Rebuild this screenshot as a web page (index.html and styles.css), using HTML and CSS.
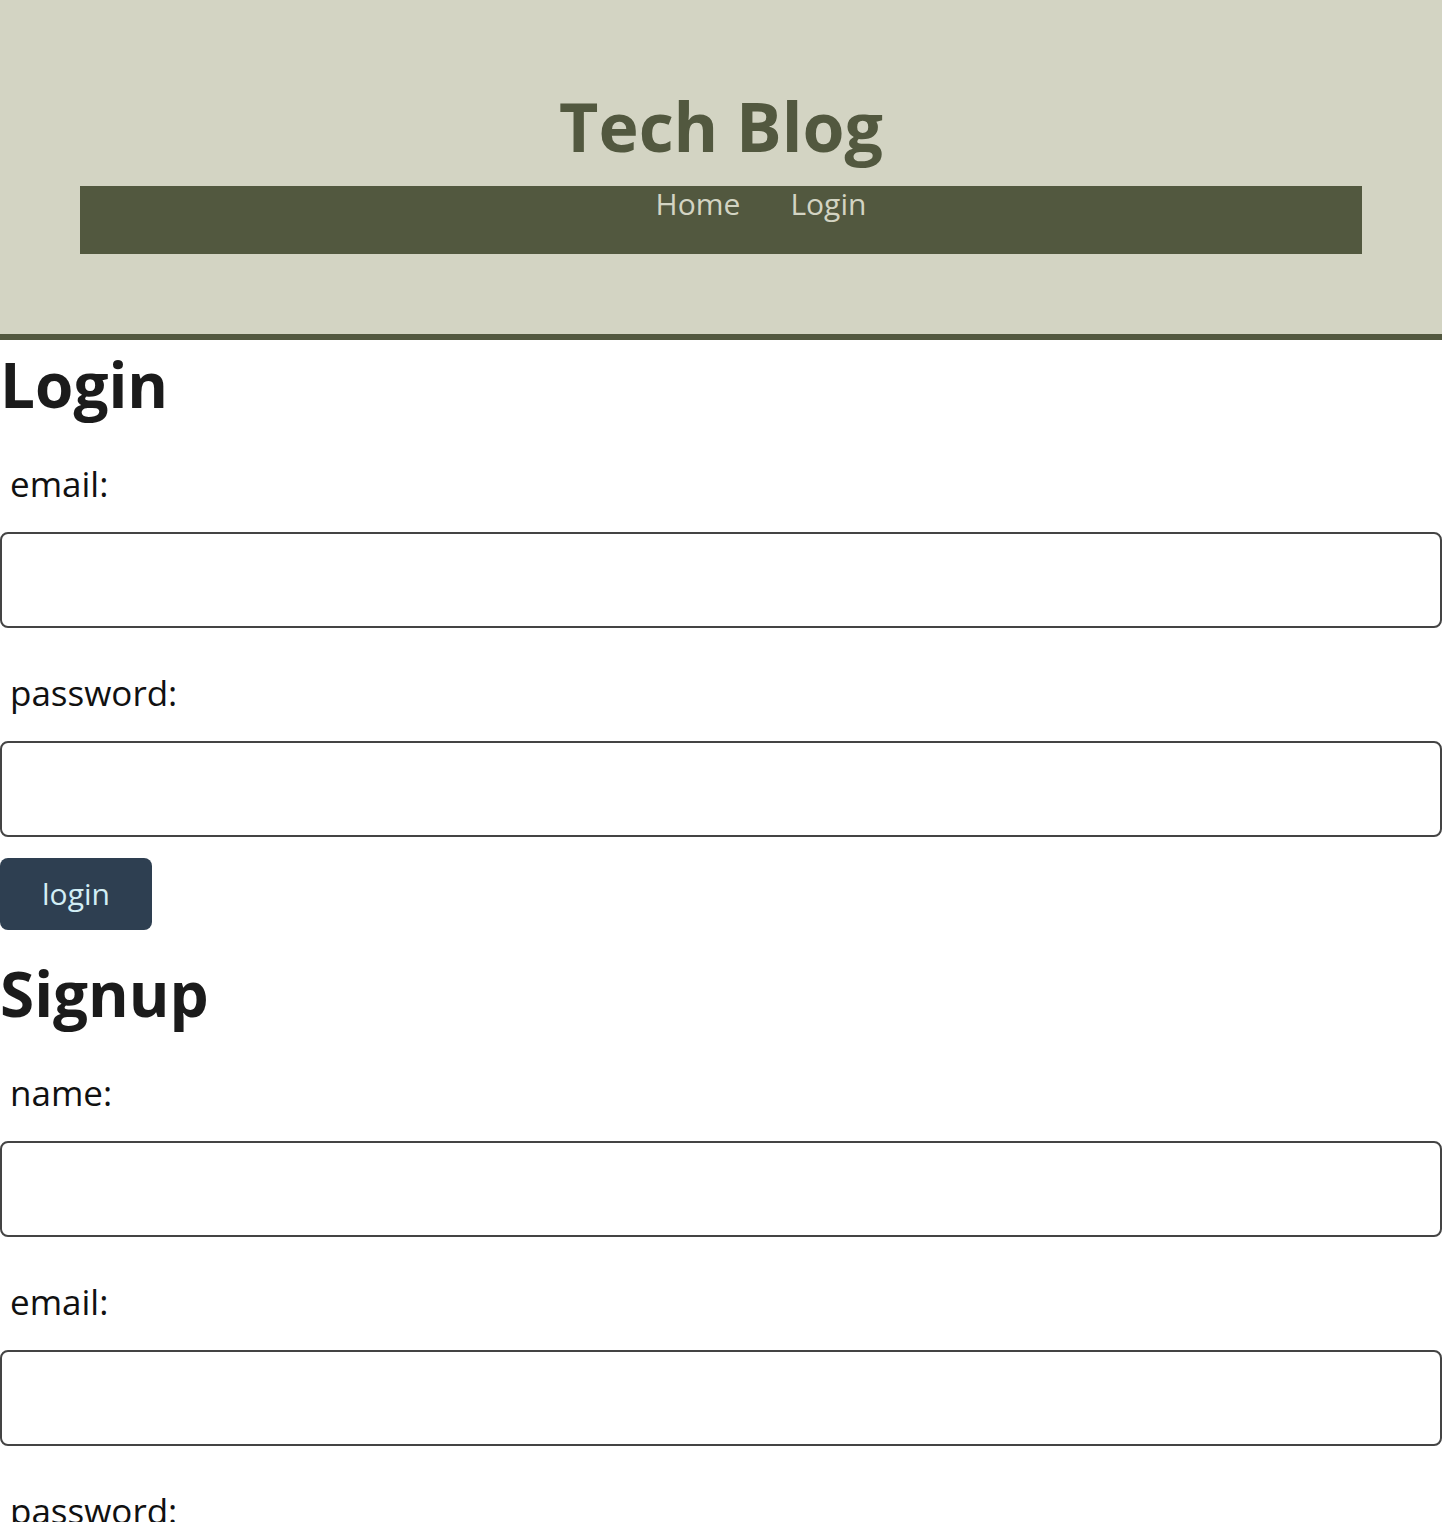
FILE: index.html
```html
<!DOCTYPE html>
<html lang="en">
<head>
<meta charset="utf-8">
<title>Tech Blog</title>
<link rel="stylesheet" href="styles.css">
</head>
<body>
<header class="site-header">
  <h1 class="site-title">Tech Blog</h1>
  <nav class="site-nav">
    <a class="nav-link" href="#">Home</a>
    <a class="nav-link" href="#">Login</a>
  </nav>
</header>
<main class="content">
  <section class="auth-block">
    <h2 class="section-title">Login</h2>
    <form class="auth-form">
      <label class="field-label" for="login-email">email:</label>
      <input class="field-input" id="login-email" type="text">
      <label class="field-label" for="login-password">password:</label>
      <input class="field-input" id="login-password" type="password">
      <button class="submit-btn" type="button">login</button>
    </form>
  </section>
  <section class="auth-block">
    <h2 class="section-title section-title--spaced">Signup</h2>
    <form class="auth-form">
      <label class="field-label" for="signup-name">name:</label>
      <input class="field-input" id="signup-name" type="text">
      <label class="field-label" for="signup-email">email:</label>
      <input class="field-input" id="signup-email" type="text">
      <label class="field-label" for="signup-password">password:</label>
      <input class="field-input" id="signup-password" type="password">
      <button class="submit-btn" type="button">signup</button>
    </form>
  </section>
</main>
</body>
</html>
```

FILE: styles.css
```css
* {
  box-sizing: border-box;
}

html, body {
  margin: 0;
  padding: 0;
}

body {
  font-family: "Open Sans", "Noto Sans", "Liberation Sans", sans-serif;
  color: #1b1b1b;
  background: #ffffff;
}

.site-header {
  background: #d3d4c3;
  border-bottom: 6px solid #52583f;
  padding: 86px 0 80px;
}

.site-title {
  margin: 0;
  text-align: center;
  font-size: 68px;
  line-height: 80px;
  font-weight: 700;
  color: #52583f;
}

.site-nav {
  margin: 20px 80px 0;
  height: 68px;
  background: #52583f;
  padding-left: 80px;
  display: flex;
  justify-content: center;
  align-items: flex-start;
  gap: 50px;
}

.nav-link {
  font-size: 30px;
  line-height: 36px;
  color: #d3d4c3;
  text-decoration: none;
}

.section-title {
  margin: 9px 0 0;
  font-size: 62px;
  line-height: 70px;
  font-weight: 700;
  color: #1b1b1b;
}

.section-title--spaced {
  margin-top: 28px;
}

.auth-form {
  display: flex;
  flex-direction: column;
  align-items: stretch;
}

.field-label {
  display: block;
  margin: 41px 0 24px;
  padding-left: 10px;
  font-size: 35px;
  line-height: 48px;
  color: #111111;
}

.field-input {
  display: block;
  width: 100%;
  height: 96px;
  margin: 0;
  border: 2px solid #444444;
  border-radius: 8px;
  background: #ffffff;
  font-size: 30px;
  font-family: inherit;
}

.submit-btn {
  align-self: flex-start;
  margin-top: 21px;
  width: 152px;
  height: 72px;
  border: none;
  border-radius: 8px;
  background: #2e3f51;
  color: #d2eef5;
  font-family: inherit;
  font-size: 30px;
  line-height: 40px;
  padding: 0;
}
```
